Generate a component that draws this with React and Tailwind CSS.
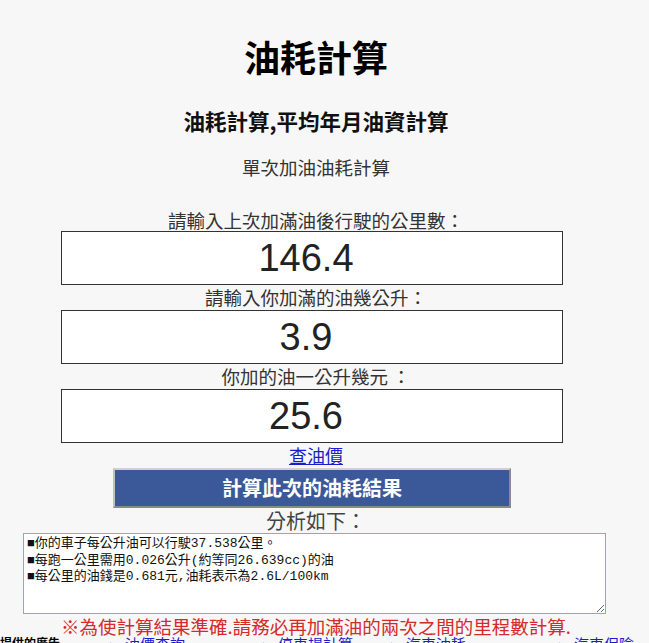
import React from 'react'

const cjk = { fontFamily: '"Noto Sans CJK TC", "Noto Sans", sans-serif' }

function Label({ children, className = '' }) {
  return (
    <div className={`text-center text-[18.5px] text-[#333] ${className}`} style={cjk}>
      {children}
    </div>
  )
}

function NumberBox({ value }) {
  return (
    <div className="ml-[61px] w-[502px] h-[54px] border border-[#333] bg-white flex items-center justify-center pr-[12px]">
      <span
        className="text-[38px] text-[#222] leading-none"
        style={{ fontFamily: '"Liberation Sans", Arial, sans-serif' }}
      >
        {value}
      </span>
    </div>
  )
}

export default function App() {
  const result =
    '■你的車子每公升油可以行駛37.538公里。\n■每跑一公里需用0.026公升(約等同26.639cc)的油\n■每公里的油錢是0.681元,油耗表示為2.6L/100km'

  const ads = [
    { x: 'ml-[50px]', text: '油價查詢' },
    { x: 'ml-[78px]', text: '停車場計算' },
    { x: 'ml-[38px]', text: '汽車油耗' },
    { x: 'ml-[93px]', text: '汽車保險' },
  ]

  return (
    <div className="min-h-[643px] w-[649px] overflow-hidden bg-[#f7f7f7]">
      <div className="w-[632px] pt-[33px]">
        {/* Header */}
        <h1
          className="text-center text-[36px] font-bold text-black h-[46px] leading-[46px]"
          style={cjk}
        >
          油耗計算
        </h1>
        <h2
          className="mt-[27px] text-center text-[21.5px] font-bold text-[#111] h-[29px] leading-[29px]"
          style={cjk}
        >
          油耗計算,平均年月油資計算
        </h2>
        <Label className="mt-[20px] h-[24px] leading-[24px]">單次加油油耗計算</Label>

        {/* Inputs */}
        <Label className="mt-[30px] h-[22px] leading-[22px]">請輸入上次加滿油後行駛的公里數：</Label>
        <NumberBox value="146.4" />
        <Label className="h-[25px] leading-[25px]">請輸入你加滿的油幾公升：</Label>
        <NumberBox value="3.9" />
        <Label className="h-[25px] leading-[25px]">你加的油一公升幾元 ：</Label>
        <NumberBox value="25.6" />

        <div className="h-[25px] leading-[25px] text-center" style={cjk}>
          <a href="#" className="text-[18px] text-[#1c1ccc] underline">
            查油價
          </a>
        </div>

        {/* Button */}
        <button
          className="ml-[113px] w-[398px] h-[40px] bg-[#3b5998] border-2 border-t-[#d0d0d0] border-l-[#c0c0c0] border-r-[#8a8a8a] border-b-[#8a8a8a] text-white text-[20px] font-bold flex items-center justify-center"
          style={cjk}
        >
          計算此次的油耗結果
        </button>

        <div className="h-[25px] leading-[25px] text-center text-[20px] text-[#444]" style={cjk}>
          分析如下：
        </div>

        {/* Result */}
        <textarea
          readOnly
          value={result}
          className="block ml-[23px] w-[583px] h-[81px] bg-white border border-[#86a9dc] px-[3px] py-[2px] text-[13px] leading-[16.5px] text-[#111] outline-none"
          style={{ fontFamily: '"Liberation Mono", "Noto Sans CJK TC", monospace' }}
        />

        <div
          className="mt-[3px] h-[19px] leading-[19px] text-center text-[18.5px] text-[#d42a2a]"
          style={cjk}
        >
          ※為使計算結果準確.請務必再加滿油的兩次之間的里程數計算.
        </div>
      </div>

      {/* Ads row */}
      <div className="flex items-start h-[16px] leading-none whitespace-nowrap" style={cjk}>
        <span className="shrink-0 font-bold text-black text-[12px] mt-[1px]">提供的廣告</span>
        {ads.map((a) => (
          <a
            key={a.text}
            href="#"
            className={`${a.x} shrink-0 text-[#1c1ccc] flex items-start gap-[10px] text-[15px] leading-none`}
          >
            <span className="text-[9px] mt-[3px]">▸</span>
            {a.text}
          </a>
        ))}
      </div>
    </div>
  )
}
